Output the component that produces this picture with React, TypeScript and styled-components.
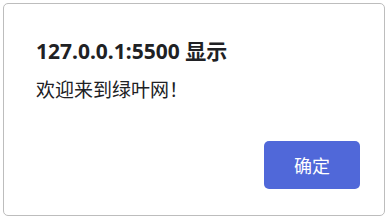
import React from 'react';
import styled, { createGlobalStyle } from 'styled-components';

const GlobalStyle = createGlobalStyle`
  html, body {
    margin: 0;
    padding: 0;
    background: #ffffff;
  }
  body {
    font-family: 'Noto Sans', 'Noto Sans CJK SC', sans-serif;
  }
`;

const App = () => {
  return (
    <Page>
      <GlobalStyle />
      <Dialog>
        <Title>127.0.0.1:5500 显示</Title>
        <Message>欢迎来到绿叶网！</Message>
        <Footer>
          <OkButton>确定</OkButton>
        </Footer>
      </Dialog>
    </Page>
  );
};

const Page = styled.div`
  padding: 3px;
  width: 387px;
  height: 218px;
  box-sizing: border-box;
`;

const Dialog = styled.div`
  box-sizing: border-box;
  width: 382px;
  height: 213px;
  border: 1px solid #bdbdbd;
  border-radius: 5px;
  background: #ffffff;
  padding: 33px 24px 0 32px;
  display: flex;
  flex-direction: column;
`;

const Title = styled.div`
  font-family: 'Noto Sans', 'Noto Sans CJK SC', sans-serif;
  font-size: 21px;
  font-weight: 700;
  line-height: 28px;
  color: #202124;
`;

const Message = styled.div`
  font-family: 'Noto Sans CJK SC', sans-serif;
  font-size: 19px;
  line-height: 28px;
  color: #202124;
  margin-top: 10px;
`;

const Footer = styled.div`
  display: flex;
  justify-content: flex-end;
  margin-top: 38px;
`;

const OkButton = styled.button`
  width: 96px;
  height: 48px;
  border: none;
  border-radius: 5px;
  background: #5068d9;
  color: #ffffff;
  font-family: 'Noto Sans CJK SC', sans-serif;
  font-size: 18px;
  cursor: pointer;
`;

export default App;
